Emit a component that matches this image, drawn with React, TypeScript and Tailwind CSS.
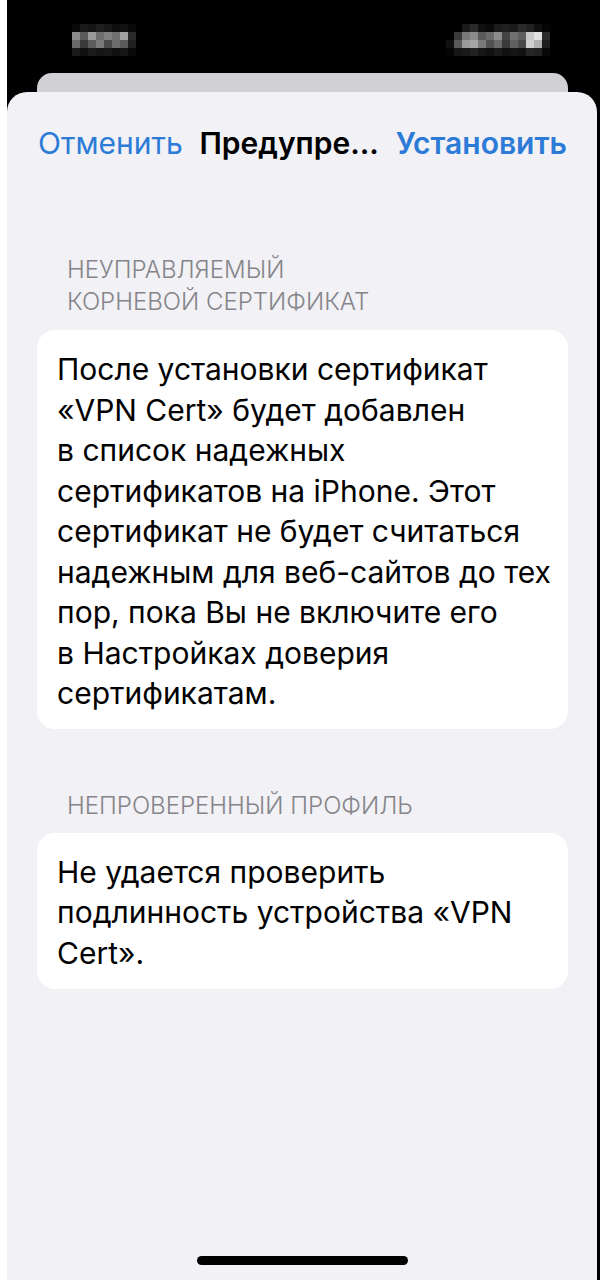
import React from "react";

const timeBlocks = [
  ["bg-[#0a0a0a]", "bg-[#1a1a1a]", "bg-[#141414]", "bg-[#1e1e1e]", "bg-[#181818]", "bg-[#0e0e0e]", "bg-[#111111]", "bg-[#0a0a0a]"],
  ["bg-[#8c8c8c]", "bg-[#5a5a5a]", "bg-[#9a9a9a]", "bg-[#6e6e6e]", "bg-[#808080]", "bg-[#707070]", "bg-[#a0a0a0]", "bg-[#2a2a2a]"],
  ["bg-[#6a6a6a]", "bg-[#3a3a3a]", "bg-[#5c5c5c]", "bg-[#7a7a7a]", "bg-[#4a4a4a]", "bg-[#6c6c6c]", "bg-[#5a5a5a]", "bg-[#202020]"],
  ["bg-[#1a1a1a]", "bg-[#101010]", "bg-[#1c1c1c]", "bg-[#141414]", "bg-[#181818]", "bg-[#101010]", "bg-[#161616]", "bg-[#0a0a0a]"],
];

const iconBlocks = [
  ["bg-[#000000]", "bg-[#000000]", "bg-[#1a1a1a]", "bg-[#2a2a2a]", "bg-[#101010]", "bg-[#0a0a0a]", "bg-[#1c1c1c]", "bg-[#202020]", "bg-[#1a1a1a]", "bg-[#2a2a2a]", "bg-[#222222]", "bg-[#101010]", "bg-[#050505]", "bg-[#000000]"],
  ["bg-[#000000]", "bg-[#3a3a3a]", "bg-[#7a7a7a]", "bg-[#8a8a8a]", "bg-[#5a5a5a]", "bg-[#6a6a6a]", "bg-[#8c8c8c]", "bg-[#444444]", "bg-[#707070]", "bg-[#5e5e5e]", "bg-[#c8c8c8]", "bg-[#e0e0e0]", "bg-[#2a2a2a]", "bg-[#000000]"],
  ["bg-[#101010]", "bg-[#5a5a5a]", "bg-[#9a9a9a]", "bg-[#a4a4a4]", "bg-[#7a7a7a]", "bg-[#525252]", "bg-[#6a6a6a]", "bg-[#3a3a3a]", "bg-[#606060]", "bg-[#4a4a4a]", "bg-[#d0d0d0]", "bg-[#b0b0b0]", "bg-[#1e1e1e]", "bg-[#000000]"],
  ["bg-[#050505]", "bg-[#151515]", "bg-[#1a1a1a]", "bg-[#222222]", "bg-[#161616]", "bg-[#101010]", "bg-[#1a1a1a]", "bg-[#101010]", "bg-[#151515]", "bg-[#111111]", "bg-[#262626]", "bg-[#222222]", "bg-[#080808]", "bg-[#000000]"],
];

function Pixelated({ rows }: { rows: string[][] }) {
  return (
    <div className="flex flex-col">
      {rows.map((row, i) => (
        <div key={i} className="flex">
          {row.map((c, j) => (
            <div key={j} className={`h-[8px] w-[8px] ${c}`} />
          ))}
        </div>
      ))}
    </div>
  );
}

const font = { fontFamily: "Inter, 'Noto Sans', 'Liberation Sans', sans-serif" };

export default function App() {
  const card1 = [
    "После установки сертификат",
    "«VPN Cert» будет добавлен",
    "в список надежных",
    "сертификатов на iPhone. Этот",
    "сертификат не будет считаться",
    "надежным для веб-сайтов до тех",
    "пор, пока Вы не включите его",
    "в Настройках доверия",
    "сертификатам.",
  ];
  const card2 = [
    "Не удается проверить",
    "подлинность устройства «VPN",
    "Cert».",
  ];
  return (
    <div className="flex h-[1280px] w-[606px] bg-white" style={font}>
      <div className="ml-[7px] flex w-[593px] flex-col bg-black">
        <div className="flex h-[73px] items-start justify-between pl-[65px] pr-[42px] pt-[24px]">
          <Pixelated rows={timeBlocks} />
          <Pixelated rows={iconBlocks} />
        </div>
        <div className="ml-[30px] mr-[32px] h-[19px] rounded-t-[15px] bg-[#d0d0d5]" />
        <div className="mr-[3px] flex flex-1 flex-col rounded-t-[20px] bg-[#f1f1f6]">
          <div className="flex h-[102px] items-center justify-between pl-[31px] pr-[30px] text-[30px]">
            <span className="text-[#2c7bd6]">Отменить</span>
            <span className="font-semibold text-black">Предупре...</span>
            <span className="font-semibold text-[#2c7bd6]">Установить</span>
          </div>

          <div className="mt-[60px] pl-[60px] text-[24px] font-light leading-[32px] text-[#858589]">
            <div>НЕУПРАВЛЯЕМЫЙ</div>
            <div>КОРНЕВОЙ СЕРТИФИКАТ</div>
          </div>
          <div className="ml-[30px] mr-[29px] mt-[12px] rounded-[18px] bg-white pb-[15px] pl-[20px] pt-[19px] text-[30px] leading-[40.5px] text-black">
            {card1.map((l, i) => (
              <div key={i} className="whitespace-nowrap">{l}</div>
            ))}
          </div>

          <div className="mt-[61px] pl-[60px] text-[24px] font-light leading-[32px] text-[#858589]">
            <div>НЕПРОВЕРЕННЫЙ ПРОФИЛЬ</div>
          </div>
          <div className="ml-[30px] mr-[29px] mt-[11px] rounded-[18px] bg-white pb-[16px] pl-[20px] pt-[19px] text-[30px] leading-[40.5px] text-black">
            {card2.map((l, i) => (
              <div key={i} className="whitespace-nowrap">{l}</div>
            ))}
          </div>

          <div className="mb-[15px] mt-auto h-[9px] w-[211px] self-center rounded-full bg-black" />
        </div>
      </div>
    </div>
  );
}
